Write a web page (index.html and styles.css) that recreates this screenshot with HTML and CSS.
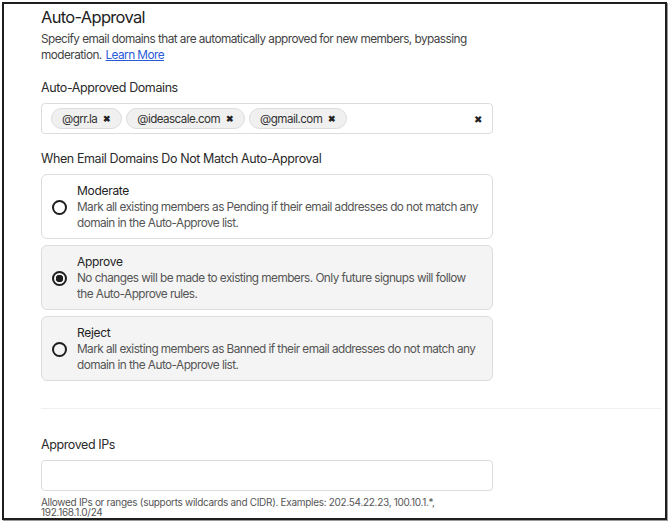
FILE: index.html
```html
<!DOCTYPE html>
<html lang="en">

<head>
    <meta charset="UTF-8">
    <meta name="viewport" content="width=device-width, initial-scale=1.0">
    <title>Auto-Approval</title>
    <link rel="stylesheet" href="styles.css">
</head>

<body>

    <div id="frame">
        <div id="content">
            <h1>Auto-Approval</h1>
            <p class="desc">Specify email domains that are automatically approved for new members, bypassing moderation. <a href="#">Learn More</a></p>

            <div class="label">Auto-Approved Domains</div>
            <div class="tagBox">
                <span class="chip">@grr.la <b>&#x2716;</b></span>
                <span class="chip">@ideascale.com <b>&#x2716;</b></span>
                <span class="chip">@gmail.com <b>&#x2716;</b></span>
                <span class="clear">&#x2716;</span>
            </div>

            <div class="label">When Email Domains Do Not Match Auto-Approval</div>
            <div class="options">
                <div class="option">
                    <span class="radio"></span>
                    <div>
                        <div class="optTitle">Moderate</div>
                        <div class="optText">Mark all existing members as Pending if their email addresses do not match any domain in the Auto-Approve list.</div>
                    </div>
                </div>
                <div class="option filled">
                    <span class="radio checked"></span>
                    <div>
                        <div class="optTitle">Approve</div>
                        <div class="optText">No changes will be made to existing members. Only future signups will follow the Auto-Approve rules.</div>
                    </div>
                </div>
                <div class="option filled">
                    <span class="radio"></span>
                    <div>
                        <div class="optTitle">Reject</div>
                        <div class="optText">Mark all existing members as Banned if their email addresses do not match any domain in the Auto-Approve list.</div>
                    </div>
                </div>
            </div>

            <hr>

            <div class="label">Approved IPs</div>
            <div class="input"></div>
            <div class="help">Allowed IPs or ranges (supports wildcards and CIDR). Examples: 202.54.22.23, 100.10.1.*, 192.168.1.0/24</div>
        </div>
    </div>

</body>

</html>
```

FILE: styles.css
```css
* {
    margin: 0;
    padding: 0;
    box-sizing: border-box;
}

html,
body {
    width: 100%;
    height: 100%;
    background: #fff;
}

body {
    padding: 2px 3px 2px 2px;
    font-family: Inter, "Noto Sans", sans-serif;
    color: #222;
}

#frame {
    height: 518px;
    border: 2px solid #1e1e1e;
    box-shadow: 1px 1px 0 #999;
    overflow: hidden;
}

#content {
    padding: 2px 0 0 37px;
    width: 1000px;
}

h1 {
    font-size: 16.5px;
    font-weight: 400;
    line-height: 22px;
    letter-spacing: -0.7px;
    color: #222;
}

.desc {
    width: 440px;
    margin-top: 3px;
    font-size: 11.8px;
    line-height: 16px;
    letter-spacing: -0.55px;
    color: #444;
}

.desc a {
    margin-left: 1px;
    color: #2a5bd7;
}

.label {
    margin-top: 16px;
    font-size: 12.5px;
    line-height: 18px;
    letter-spacing: -0.4px;
    color: #2a2a2a;
}

.tagBox {
    width: 452px;
    height: 31px;
    margin-top: 6px;
    border: 1px solid #dcdcdc;
    border-radius: 4px;
    display: flex;
    align-items: center;
    gap: 4px;
    padding-left: 9px;
}

.chip {
    height: 21px;
    display: flex;
    align-items: center;
    gap: 6px;
    padding: 0 10px;
    background: #f0f0f0;
    border: 1px solid #dcdcdc;
    border-radius: 11px;
    font-size: 11.6px;
    letter-spacing: -0.55px;
    color: #333;
}

.chip b,
.clear {
    font-size: 8.5px;
    color: #222;
    letter-spacing: 0;
}

.clear {
    margin-left: auto;
    margin-right: 10px;
    font-size: 10px;
}

.options {
    margin-top: 6px;
    width: 452px;
    display: flex;
    flex-direction: column;
    gap: 6px;
}

.option {
    height: 65px;
    border: 1px solid #dcdcdc;
    border-radius: 6px;
    display: flex;
    align-items: center;
    gap: 10px;
    padding-left: 10px;
}

.option.filled {
    background: #f4f4f4;
}

.radio {
    flex: none;
    width: 15px;
    height: 15px;
    border: 2px solid #1e1e1e;
    border-radius: 50%;
    margin-top: 2px;
}

.radio.checked {
    background: radial-gradient(circle, #1e1e1e 0 3.5px, transparent 4px);
}

.optTitle {
    font-size: 12px;
    line-height: 16px;
    letter-spacing: -0.3px;
    color: #222;
}

.optText {
    width: 404px;
    font-size: 11.8px;
    line-height: 16px;
    letter-spacing: -0.55px;
    color: #555;
}

hr {
    margin-top: 27px;
    border: none;
    border-top: 1px solid #f0f0f0;
    width: 620px;
}

.label + .input {
    margin-top: 6px;
}

hr + .label {
    margin-top: 27px;
}

.input {
    width: 452px;
    height: 31px;
    border: 1px solid #dcdcdc;
    border-radius: 4px;
}

.help {
    width: 440px;
    margin-top: 6px;
    font-size: 10px;
    line-height: 10px;
    letter-spacing: -0.3px;
    color: #555;
}
```
